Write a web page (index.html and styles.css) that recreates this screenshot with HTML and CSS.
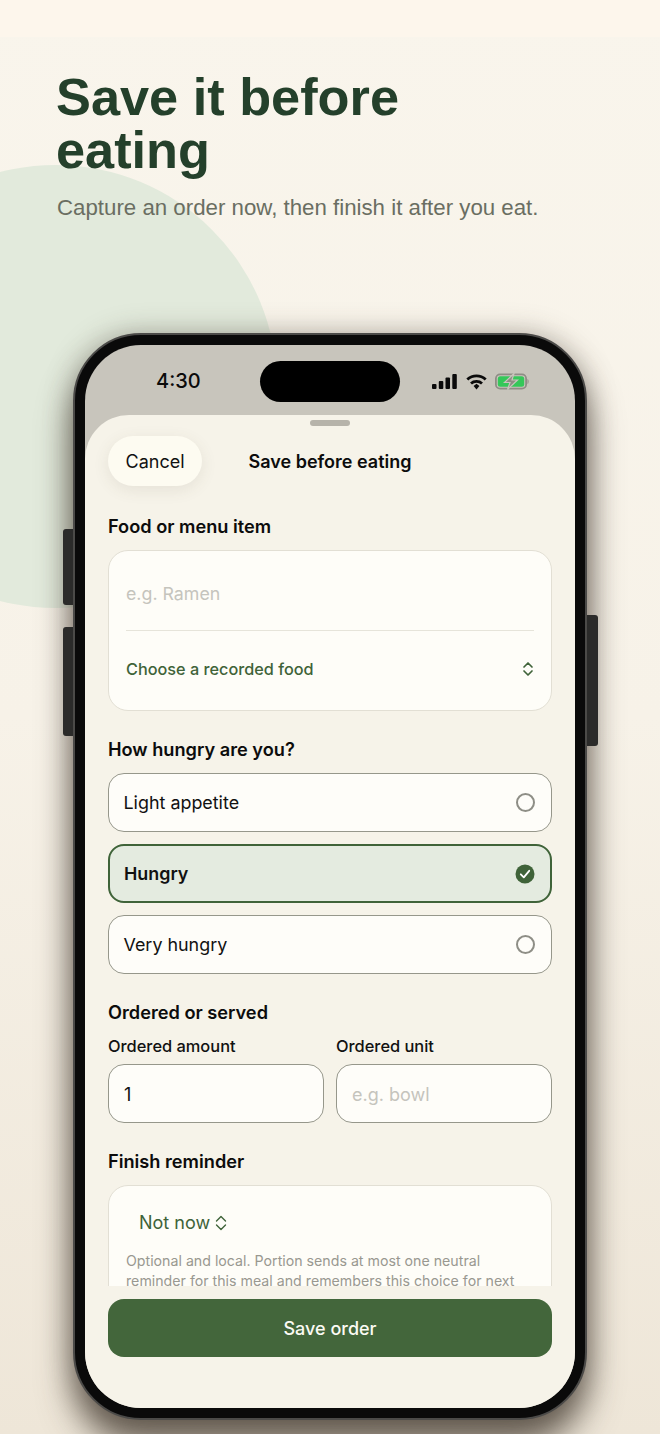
FILE: index.html
```html
<!DOCTYPE html>
<html lang="en">
<head>
<meta charset="utf-8">
<title>Save it before eating</title>
<link rel="stylesheet" href="styles.css">
</head>
<body>
<div class="page">
  <div class="blob"></div>
  <div class="topband"></div>
  <header class="hero">
    <h1>Save it before<br>eating</h1>
    <p>Capture an order now, then finish it after you eat.</p>
  </header>
  <div class="phone">
    <span class="side side-a"></span>
    <span class="side side-b"></span>
    <span class="side side-c"></span>
    <div class="screen">
      <div class="status">
        <span class="time">4:30</span>
        <span class="island"></span>
        <span class="status-icons">
          <svg width="26" height="15" viewBox="0 0 26 15"><g fill="#0b0b0b"><rect x="0" y="10" width="4.500" height="5" rx="1"/><rect x="6.800" y="7" width="4.500" height="8" rx="1"/><rect x="13.500" y="3.500" width="4.500" height="11.500" rx="1"/><rect x="20.300" y="0" width="4.500" height="15" rx="1"/></g></svg>
          <svg width="21" height="16" viewBox="0 0 21 16"><g fill="none" stroke="#0b0b0b" stroke-width="2.800"><path d="M1.300 5.500C6.500 .6 14.500 .6 19.700 5.500"/><path d="M5 9.500C8 6.700 13 6.700 16 9.500"/></g><path d="M7.600 12L10.500 9.800 13.400 12 10.500 15.500Z" fill="#0b0b0b"/></svg>
          <svg class="battery" width="35" height="17" viewBox="0 0 35 17"><rect x="0.900" y="1.400" width="30.200" height="14.200" rx="4.200" fill="none" stroke="#8f8d85" stroke-width="1.800"/><rect x="2.800" y="3.300" width="26.400" height="10.400" rx="2.500" fill="#35c759"/><path d="M32.500 6c1.500.4 1.500 4.600 0 5z" fill="#8f8d85"/><path d="M19 .5L9.500 9.500h5.500l-2.500 7 10-9.500h-5.500z" fill="#8f8d85" stroke="#c8c5bc" stroke-width="1.200"/></svg>
        </span>
      </div>
      <div class="sheet">
        <span class="handle"></span>
        <div class="sheet-head">
          <button class="cancel">Cancel</button>
          <span class="sheet-title">Save before eating</span>
        </div>
        <div class="scroll">
          <h2 class="label">Food or menu item</h2>
          <div class="card food-card">
            <div class="ph food-input">e.g. Ramen</div>
            <div class="choose">
              <span>Choose a recorded food</span>
              <svg class="chev" width="12" height="16" viewBox="0 0 12 16"><path d="M2 6l4-4 4 4M2 10l4 4 4-4" fill="none" stroke="#3f6339" stroke-width="1.700" stroke-linecap="round" stroke-linejoin="round"/></svg>
            </div>
          </div>
          <h2 class="label hungry-label">How hungry are you?</h2>
          <div class="options">
            <div class="option"><span>Light appetite</span><i class="radio"></i></div>
            <div class="option selected"><span>Hungry</span>
              <svg width="20" height="20" viewBox="0 0 20 20"><circle cx="10" cy="10" r="9.500" fill="#3f6339"/><path d="M5.800 10.300l3 3 5.400-6.500" fill="none" stroke="#fff" stroke-width="1.800" stroke-linecap="round" stroke-linejoin="round"/></svg>
            </div>
            <div class="option"><span>Very hungry</span><i class="radio"></i></div>
          </div>
          <h2 class="label ordered-label">Ordered or served</h2>
          <div class="fields">
            <div class="field">
              <label>Ordered amount</label>
              <div class="input">1</div>
            </div>
            <div class="field">
              <label>Ordered unit</label>
              <div class="input ph">e.g. bowl</div>
            </div>
          </div>
          <h2 class="label reminder-label">Finish reminder</h2>
          <div class="card reminder-card">
            <div class="not-now">Not now
              <svg width="12" height="16" viewBox="0 0 12 16"><path d="M1.500 6l4.500-4.500 4.500 4.500M1.500 10l4.500 4.500 4.500-4.500" fill="none" stroke="#3f6339" stroke-width="1.400" stroke-linecap="round" stroke-linejoin="round"/></svg>
            </div>
            <p class="hint">Optional and local. Portion sends at most one neutral reminder for this meal and remembers this choice for next time.</p>
          </div>
        </div>
        <div class="footer">
          <button class="save">Save order</button>
        </div>
      </div>
    </div>
  </div>
</div>
</body>
</html>
```
FILE: styles.css
```css
* { box-sizing: border-box; }
html, body { margin: 0; padding: 0; }
body { width: 660px; height: 1434px; overflow: hidden; }
.page {
  position: relative;
  width: 660px;
  height: 1434px;
  overflow: hidden;
  background: linear-gradient(180deg, #f9f5ec 0%, #f7f2e8 50%, #eee6d8 100%);
  font-family: Inter, "Liberation Sans", sans-serif;
}
.topband { position: absolute; left: 0; top: 0; width: 660px; height: 37px; background: #fdf6ec; }
.blob {
  position: absolute;
  left: -166px;
  top: 165px;
  width: 443px;
  height: 443px;
  border-radius: 50%;
  background: #e2eadc;
}
.hero { position: relative; padding: 71px 40px 0 56px; height: 333px; }
.hero h1 {
  margin: 0;
  font: 700 52.300px/53px "Liberation Sans", sans-serif;
  color: #24402b;
}
.hero p {
  margin: 15px 0 0 1px;
  font: 400 22.270px/32px "Liberation Sans", sans-serif;
  color: #6a6e62;
}
.phone {
  position: relative;
  width: 514px;
  height: 1087px;
  margin-left: 73px;
  border-radius: 68px;
  background: #0a0a0a;
  border: 2px solid #4b4a48;
  padding: 10px;
  box-shadow: 0 26px 34px rgba(60, 50, 40, .72), 0 0 28px rgba(70, 60, 50, .35);
}
.side { position: absolute; background: #2b2b2a; }
.side-a { left: -12px; top: 194px; width: 10px; height: 76px; border-radius: 3px 0 0 3px; }
.side-b { left: -12px; top: 292px; width: 10px; height: 109px; border-radius: 3px 0 0 3px; }
.side-c { right: -13px; top: 280px; width: 11px; height: 131px; border-radius: 0 3px 3px 0; }
.screen {
  display: flex;
  flex-direction: column;
  height: 100%;
  border-radius: 56px;
  overflow: hidden;
  background: #c8c5bc;
}
.status { position: relative; height: 70px; flex: none; }
.time {
  position: absolute;
  left: 71px;
  top: 24px;
  font-size: 20px;
  line-height: 24px;
  font-weight: 500;
  color: #0b0b0b;
}
.island {
  position: absolute;
  left: 175px;
  top: 16px;
  width: 140px;
  height: 41px;
  border-radius: 21px;
  background: #000;
}
.status-icons {
  position: absolute;
  left: 347px;
  top: 28px;
  display: flex;
  align-items: center;
  gap: 8px;
}
.sheet {
  flex: 1;
  min-height: 0;
  display: flex;
  flex-direction: column;
  background: #f6f3e9;
  border-radius: 44px 44px 0 0;
  padding: 5px 23px 0;
}
.handle {
  flex: none;
  align-self: center;
  width: 40px;
  height: 6px;
  border-radius: 3px;
  background: #b6b3aa;
}
.sheet-head {
  flex: none;
  position: relative;
  display: flex;
  align-items: center;
  margin-top: 10px;
  height: 50px;
}
.cancel {
  width: 94px;
  height: 50px;
  border: 0;
  border-radius: 25px;
  padding: 0;
  background: #fdfbf1;
  box-shadow: 0 4px 16px rgba(90, 80, 60, .1);
  font: 400 18px Inter, sans-serif;
  color: #111;
}
.sheet-title {
  position: absolute;
  left: 0;
  right: 0;
  text-align: center;
  font-size: 18px;
  font-weight: 600;
  color: #0c0c0c;
}
.scroll { flex: none; height: 800px; overflow: hidden; padding-top: 28px; }
.label {
  margin: 0;
  font-size: 18.200px;
  line-height: 24px;
  font-weight: 600;
  color: #0c0c0c;
}
.card {
  background: #fefdf8;
  border: 1px solid #e2dfd4;
  border-radius: 20px;
}
.food-card { margin-top: 12px; height: 161px; padding: 0 17px; }
.ph { color: #c5c4bd; }
.food-input {
  height: 80px;
  line-height: 85px;
  font-size: 17.800px;
  border-bottom: 1px solid #e6e4da;
}
.choose {
  display: flex;
  justify-content: space-between;
  align-items: center;
  height: 76px;
  font-size: 16.250px;
  font-weight: 500;
  color: #3f6339;
}
.hungry-label { margin-top: 26px; }
.options { margin-top: 12px; display: flex; flex-direction: column; gap: 12px; }
.option {
  display: flex;
  justify-content: space-between;
  align-items: center;
  height: 59px;
  padding: 0 16px 0 14.500px;
  background: #fefdf9;
  border: 1px solid #96978b;
  border-radius: 16px;
  font-size: 17.900px;
  color: #111;
}
.option.selected {
  background: #e4ebe0;
  border: 2px solid #3f6339;
  padding: 0 15px 0 14px;
  font-weight: 600;
}
.radio {
  width: 19px;
  height: 19px;
  border-radius: 50%;
  border: 2px solid #8e8e86;
}
.ordered-label { margin-top: 26px; }
.fields { margin-top: 11px; display: grid; grid-template-columns: 216px 216px; gap: 12px; }
.field label {
  display: block;
  font-size: 16.400px;
  line-height: 22px;
  font-weight: 500;
  color: #111;
}
.input {
  margin-top: 7px;
  height: 59px;
  line-height: 59px;
  padding: 0 15px;
  background: #fefdf9;
  border: 1px solid #96978b;
  border-radius: 16px;
  font-size: 18px;
  color: #111;
}
.input.ph { color: #c5c4bd; }
.reminder-label { margin-top: 26px; }
.reminder-card { margin-top: 12px; height: 140px; padding: 0 17px; }
.not-now {
  display: flex;
  align-items: center;
  gap: 5px;
  margin: 24px 0 0 13px;
  font-size: 18px;
  line-height: 26px;
  color: #3f6339;
}
.hint {
  margin: 15px 0 0;
  font-size: 14.200px;
  line-height: 20px;
  color: #999890;
}
.footer { flex: none; padding-top: 13px; }
.save {
  display: block;
  width: 444px;
  height: 58px;
  border: 0;
  border-radius: 16px;
  background: #43663b;
  font: 500 18px Inter, sans-serif;
  color: #fbfaf3;
}
```
